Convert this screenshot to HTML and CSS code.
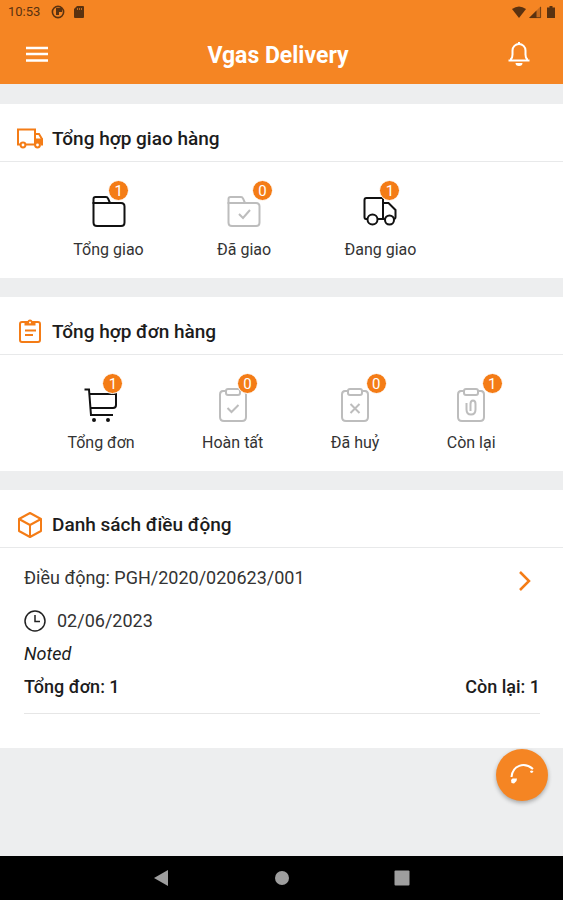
FILE: index.html
```html
<!DOCTYPE html>
<html lang="vi">
<head>
<meta charset="utf-8">
<meta name="viewport" content="width=device-width, initial-scale=1">
<title>Vgas Delivery</title>
<link rel="stylesheet" href="styles.css">
</head>
<body>
<header class="top">
  <div class="status">
    <span class="status-time">10:53</span>
    <svg width="14" height="14" viewBox="0 0 14 14"><circle cx="7" cy="7" r="5.6" fill="none" stroke="currentColor" stroke-width="1.6"/><path d="M5 3h6v4H8v3H5z" fill="currentColor"/></svg>
    <svg class="status-card" width="10" height="12" viewBox="0 0 10 12"><path d="M3 0h6q1 0 1 1v10q0 1-1 1H1q-1 0-1-1V3z" fill="currentColor"/><path d="M3.500 2v2M5.500 2v2M7.500 2v2" stroke="#f58523" stroke-width=".7"/></svg>
    <span class="status-right">
      <svg width="14" height="12" viewBox="0 0 14 12"><path d="M0 3Q7-2 14 3L7 12z" fill="currentColor"/></svg>
      <svg width="12" height="12" viewBox="0 0 12 12"><path d="M0 12L12 0v12z" fill="currentColor" opacity=".3"/><path d="M0 12L7.500 4.500V12z" fill="currentColor"/><path d="M1 11.600H11.600V1" fill="none" stroke="currentColor" stroke-width=".8"/></svg>
      <svg class="status-battery" width="8" height="12" viewBox="0 0 8 12"><path d="M2.500 0h3v1.500H8V12H0V1.500h2.500z" fill="currentColor"/></svg>
    </span>
  </div>
  <div class="appbar">
    <button class="icon-button" aria-label="Menu"><svg width="22" height="18" viewBox="0 0 22 18"><path d="M0 3h22M0 9h22M0 15.500h22" stroke="#fff" stroke-width="2.500"/></svg></button>
    <h1>Vgas Delivery</h1>
    <button class="icon-button" aria-label="Thông báo"><svg width="24" height="26" viewBox="0 0 24 26" fill="none" stroke="#fff" stroke-width="2"><path d="M1.500 19.500h21M4 19.500V18q1.500-1.500 1.500-4.500V9.500a6.500 6.500 0 0 1 13 0v4q0 3 1.500 4.500v1.500"/><path d="M12 1v2"/><path d="M8.500 22h7a3.500 3 0 0 1-7 0z" fill="#fff" stroke="none"/></svg></button>
  </div>
</header>
<main>
  <section class="card">
    <h2><svg width="26" height="26" viewBox="0 0 26 26" fill="none" stroke="currentColor" stroke-width="2"><path d="M3.500 18.500H1V3.500h17v15H9"/><path d="M18 8h4l3 5v5.500h-1.500"/><circle cx="6" cy="19" r="2.400"/><circle cx="20.500" cy="19" r="2.400"/><path d="M18 12.500h8V18h-2.500q-3-3-5.500 0z" fill="currentColor" stroke="none"/></svg>Tổng hợp giao hàng</h2>
    <div class="stats stats-open">
      <button class="stat">
        <svg class="dark" width="34" height="34" viewBox="0 0 34 34"><path d="M1.500 10V5q0-2 2-2H14q1.500 0 2 1.500L18 9"/><path d="M1.500 9H29q3.500 0 3.500 3.500v16q0 3.500-3.500 3.500H5q-3.500 0-3.500-3.500z"/></svg>
        <span class="badge">1</span>Tổng giao</button>
      <button class="stat">
        <svg width="34" height="34" viewBox="0 0 34 34"><path d="M1.500 10V5q0-2 2-2H14q1.500 0 2 1.500L18 9"/><path d="M1.500 9H29q3.500 0 3.500 3.500v16q0 3.500-3.500 3.500H5q-3.500 0-3.500-3.500zM12 20l4 4 7-8"/></svg>
        <span class="badge">0</span>Đã giao</button>
      <button class="stat">
        <svg class="dark" width="34" height="34" viewBox="0 0 34 34"><path d="M5 25H3q-1.500 0-1.500-2V6q0-2 2-2H20v21h-6"/><path d="M20 9h5.500l7 7v7q0 2-2 2M20 25h2"/><circle cx="9.500" cy="25.500" r="5"/><circle cx="26.500" cy="26" r="4.500"/></svg>
        <span class="badge">1</span>Đang giao</button>
    </div>
  </section>
  <section class="card">
    <h2><svg width="26" height="26" viewBox="0 0 26 26" fill="none" stroke="currentColor" stroke-width="2"><rect x="3" y="3" width="20" height="20" rx="2"/><path d="M7.500 3v3.500h11V3h-3a2.500 2.500 0 0 0-5 0z" fill="currentColor" stroke="none"/><path d="M8 11.500h11M8 16h8"/><circle cx="13" cy="3.500" r="1" fill="#fff" stroke="none"/></svg>Tổng hợp đơn hàng</h2>
    <div class="stats">
      <button class="stat">
        <svg class="dark" width="34" height="34" viewBox="0 0 34 34"><path d="M.500 2.500H5L7 28h22"/><path d="M5.500 7H32v11q0 3-3 3H6.500"/><circle cx="10" cy="33" r="1"/><circle cx="24" cy="33" r="1"/></svg>
        <span class="badge">1</span>Tổng đơn</button>
      <button class="stat">
        <svg width="34" height="34" viewBox="0 0 34 34"><path d="M10 4H7Q4 4 4 7.500V30q0 4 4 4h18q4 0 4-4V7.500Q30 4 27 4h-3"/><rect x="10" y="2" width="14" height="6" rx="2"/><path d="M11.500 21l4 4 7-7"/></svg>
        <span class="badge">0</span>Hoàn tất</button>
      <button class="stat">
        <svg width="34" height="34" viewBox="0 0 34 34"><path d="M10 4H7Q4 4 4 7.500V30q0 4 4 4h18q4 0 4-4V7.500Q30 4 27 4h-3"/><rect x="10" y="2" width="14" height="6" rx="2"/><path d="M12.500 17l9 9M21.500 17l-9 9"/></svg>
        <span class="badge">0</span>Đã huỷ</button>
      <button class="stat">
        <svg width="34" height="34" viewBox="0 0 34 34"><path d="M10 4H7Q4 4 4 7.500V30q0 4 4 4h18q4 0 4-4V7.500Q30 4 27 4h-3"/><rect x="10" y="2" width="14" height="6" rx="2"/><path d="M12.500 16v6.500q0 5 4.500 5t4.500-5v-5.500q0-3.500-2.500-3.500t-2.500 3.500V24"/></svg>
        <span class="badge">1</span>Còn lại</button>
    </div>
  </section>
  <section class="card">
    <h2><svg width="26" height="26" viewBox="0 0 26 26" fill="none" stroke="currentColor" stroke-width="2" stroke-linejoin="round"><path d="M13 1l11 6v12l-11 6-11-6V7z"/><path d="M2 7l11 6 11-6M13 13v12"/></svg>Danh sách điều động</h2>
    <article class="order">
      <a class="order-link" href="#order">Điều động: PGH/2020/020623/001
        <svg width="12" height="20" viewBox="0 0 12 20"><path d="M1 4l9 9-9 9" fill="none" stroke="#f47c16" stroke-width="2.500"/></svg></a>
      <p class="order-date"><svg width="22" height="22" viewBox="0 0 22 22" fill="none" stroke="#222" stroke-width="1.500"><circle cx="11" cy="11" r="10"/><path d="M11 5v6.500h5"/></svg>02/06/2023</p>
      <p class="order-note">Noted</p>
      <p class="order-total"><span>Tổng đơn: 1</span><span>Còn lại: 1</span></p>
    </article>
  </section>
</main>
<nav class="system">
  <button aria-label="Quay lại"><svg width="16" height="16" viewBox="0 0 16 16"><path d="M0 8L14 0v16z"/></svg></button>
  <button aria-label="Màn hình chính"><svg width="16" height="16" viewBox="0 0 16 16"><circle cx="8" cy="8" r="7"/></svg></button>
  <button aria-label="Ứng dụng gần đây"><svg width="16" height="16" viewBox="0 0 16 16"><rect x=".500" y=".500" width="15" height="15" rx="1"/></svg></button>
</nav>
<button class="fab" aria-label="Gọi"><svg width="26" height="26" viewBox="0 0 26 26"><path d="M2.500 15C3.500 3.500 15-.500 24 7" fill="none" stroke="#fff" stroke-width="2"/><path d="M2 18l1.500-1.500H8L7.500 19 5 21.500 2.500 21z" fill="#fff"/><path d="M21 9l2-.5 1.500 1-1.500 1.500-1.500-.5z" fill="#fff"/></svg></button>
</body>
</html>
```
FILE: styles.css
```css
* {
  box-sizing: border-box;
}

body {
  margin: 0;
  min-height: 100vh;
  display: flex;
  flex-direction: column;
  background: #edeeef;
  color: #1c1c1c;
  font-family: Roboto, "Liberation Sans", sans-serif;
  font-size: 16px;
  line-height: 20px;
}

button {
  padding: 0;
  border: 0;
  background: none;
  font: inherit;
  color: inherit;
}

svg {
  display: block;
  flex: none;
  overflow: visible;
}

h1, h2, p {
  margin: 0;
}

.top {
  background: #f58523;
}

.status {
  display: flex;
  align-items: center;
  height: 24px;
  padding: 0 8px;
  color: #5a3210;
}

.status-time {
  width: 43px;
  font-size: 13px;
}

.status-card {
  margin-left: 9px;
}

.status-right {
  display: flex;
  gap: 3px;
  margin-left: auto;
}

.status-battery {
  margin-left: 3px;
}

.appbar {
  display: flex;
  align-items: center;
  justify-content: space-between;
  height: 60px;
  padding: 0 20px;
}

.appbar h1 {
  padding-top: 3px;
  color: #fff;
  font-size: 23px;
  font-weight: 700;
  line-height: 28px;
}

.icon-button {
  display: grid;
  place-items: center;
  width: 48px;
  height: 48px;
}

.icon-button:first-child {
  width: 34px;
  margin-right: 7px;
}

main {
  flex: 1;
  display: flex;
  flex-direction: column;
  gap: 19px;
  padding: 20px 0;
}

.card {
  background: #fff;
}

.card h2 {
  display: flex;
  align-items: center;
  gap: 9px;
  height: 58px;
  padding: 12px 17px 0;
  border-bottom: 1px solid #e8e9ea;
  font-size: 19px;
  font-weight: 500;
}

.card h2 svg {
  color: #f47c16;
}

.stats {
  display: flex;
  justify-content: space-evenly;
  padding: 32px 0 18px;
}

.stats-open::after {
  content: "";
}

.stat {
  position: relative;
  display: flex;
  flex-direction: column;
  align-items: center;
  gap: 12px;
  color: #333;
  font-size: 16px;
}

.stat svg {
  fill: none;
  stroke: #bdbdbd;
  stroke-width: 2;
}

.stat .dark {
  stroke: #111;
}

.badge {
  position: absolute;
  top: -14px;
  left: 35px;
  width: 21px;
  height: 21px;
  border: 1px solid #fff;
  border-radius: 50%;
  background: #f47c16;
  color: #fff;
  font-size: 15px;
  line-height: 20px;
  text-align: center;
}

.order {
  margin: 0 23px 34px 24px;
  padding: 20px 0 16px;
  border-bottom: 1px solid #e6e6e6;
}

.order-link {
  display: flex;
  justify-content: space-between;
  align-items: center;
  padding-right: 9px;
  color: #333;
  text-decoration: none;
  font-size: 18px;
}

.order-date {
  display: flex;
  align-items: center;
  gap: 11px;
  margin-top: 22px;
  color: #333;
  font-size: 18px;
}

.order-note {
  margin-top: 12px;
  font-size: 18px;
  font-style: italic;
}

.order-total {
  display: flex;
  justify-content: space-between;
  margin-top: 13px;
  font-size: 18px;
  font-weight: 500;
}

.system {
  display: flex;
  justify-content: center;
  align-items: center;
  gap: 104px;
  height: 44px;
  background: #000;
}

.system svg {
  margin: auto;
  fill: #9e9e9e;
}

.fab {
  position: fixed;
  right: 15px;
  bottom: 99px;
  display: grid;
  place-items: center;
  width: 52px;
  height: 52px;
  border-radius: 50%;
  background: #f58523;
  box-shadow: 0 2px 4px rgba(0, 0, 0, .3);
}
```
